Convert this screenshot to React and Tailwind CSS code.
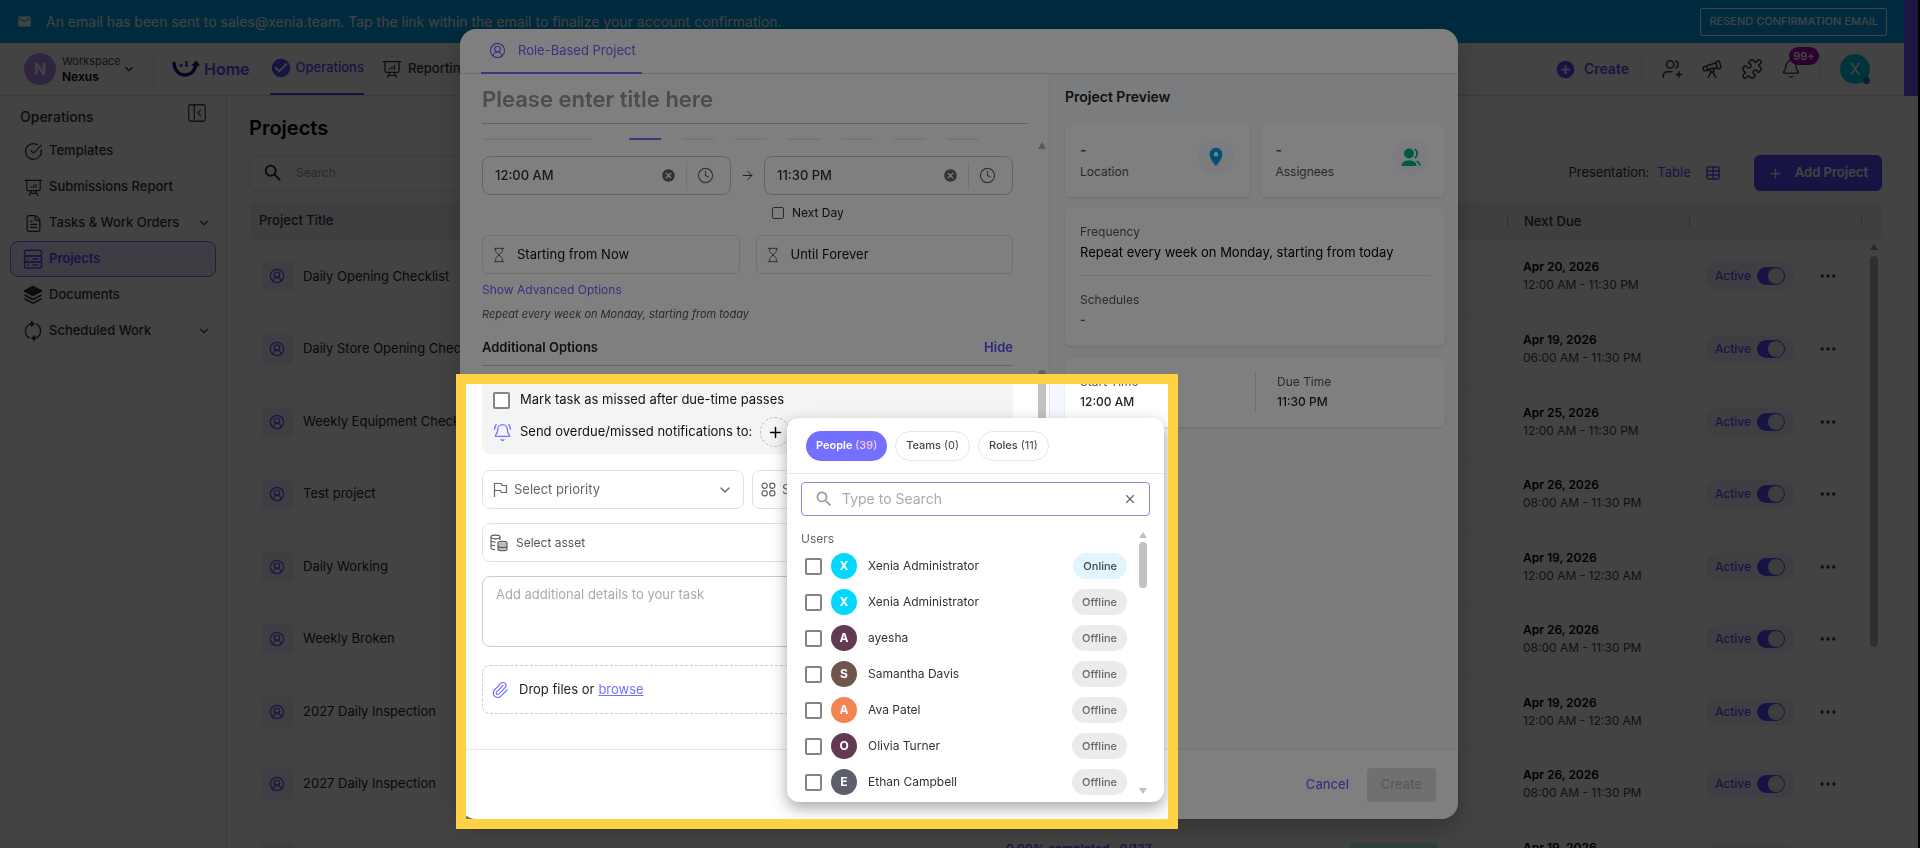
import { useState } from 'react';
import {
    ArrowRight, Bell, BellRing, ChevronDown, CircleCheckBig, CircleUserRound, Clock, Ellipsis, FileText,
    Hourglass, PanelLeftClose, Paperclip, Plus, Puzzle, Table, Telescope, X,
} from 'lucide-react';
import { MdCancel, MdCheckCircle, MdEmail, MdAddCircle, MdLocationOn, MdSearch } from 'react-icons/md';

const PROJECTS = [
    { title: 'Daily Opening Checklist', date: 'Apr 20, 2026', time: '12:00 AM - 11:30 PM' },
    { title: 'Daily Store Opening Checklist', date: 'Apr 19, 2026', time: '06:00 AM - 11:30 PM' },
    { title: 'Weekly Equipment Checklist', date: 'Apr 25, 2026', time: '12:00 AM - 11:30 PM' },
    { title: 'Test project', date: 'Apr 26, 2026', time: '08:00 AM - 11:30 PM' },
    { title: 'Daily Working', date: 'Apr 19, 2026', time: '12:00 AM - 12:30 AM' },
    { title: 'Weekly Broken', date: 'Apr 26, 2026', time: '08:00 AM - 11:30 PM' },
    { title: '2027 Daily Inspection', date: 'Apr 19, 2026', time: '12:00 AM - 12:30 AM' },
    { title: '2027 Daily Inspection', date: 'Apr 26, 2026', time: '08:00 AM - 11:30 PM' },
    { title: '', date: 'Apr 19, 2026', time: '', progress: '0.00% completed · 0/137' },
];

const USERS = [
    { name: 'Xenia Administrator', color: 'bg-[#00d8ff]', online: true },
    { name: 'Xenia Administrator', color: 'bg-[#00d8ff]' },
    { name: 'ayesha', color: 'bg-[#623a51]' },
    { name: 'Samantha Davis', color: 'bg-[#70564a]' },
    { name: 'Ava Patel', color: 'bg-[#f58351]' },
    { name: 'Olivia Turner', color: 'bg-[#623a51]' },
    { name: 'Ethan Campbell', color: 'bg-[#5c5f6b]' },
];

const BoardIcon = ({ size = 20 }) => (
    <svg width={size} height={size} viewBox="0 0 24 24" fill="none" stroke="currentColor" strokeWidth="1.5" strokeLinecap="round">
        <path d="M1.5 3h21M3.5 3v11a2 2 0 0 0 2 2h13a2 2 0 0 0 2-2V3M9 12v-1M12 12V9.500M15 12V8M9.5 16 6.5 22M14.5 16l3 6M8 19.5h8" />
    </svg>
);

const StackIcon = () => (
    <svg width="20" height="20" viewBox="0 0 20 20" fill="none" stroke="currentColor" strokeWidth="1.5" strokeLinecap="round">
        <rect x="1.5" y="1.2" width="17" height="5.9" rx="2" />
        <rect x="1.5" y="7.1" width="17" height="5.9" rx="2" />
        <rect x="1.5" y="13" width="17" height="5.9" rx="2" />
        <path d="M4.5 10h1M4.5 16h1M10 10h5M10 16h5" />
    </svg>
);

const LayersIcon = () => (
    <svg width="20" height="20" viewBox="0 0 20 20" fill="none" stroke="currentColor" strokeWidth="1.6" strokeLinejoin="round">
        <path d="M10 1.500 18.500 6 10 10.500 1.500 6z" fill="currentColor" />
        <path d="M1.500 10 10 14.500 18.500 10M1.500 13.800 10 18.300l8.500-4.500" />
    </svg>
);

const CycleIcon = () => (
    <svg width="20" height="20" viewBox="0 0 20 20" fill="none" stroke="currentColor" strokeWidth="1.4" strokeLinecap="round" strokeLinejoin="round">
        <path d="M13.500 3.200A7.700 7.700 0 0 1 12.500 17.200H11M6.500 16.800A7.700 7.700 0 0 1 7.500 2.800H9" />
        <path d="M8.500.8 11 2.800 8.500 5zM11.500 19.200 9 17.200l2.500-2.200z" fill="currentColor" />
    </svg>
);

const Logo = () => (
    <svg width="28" height="18" viewBox="0 0 28 18" fill="none">
        <path d="M2 3.5C3 11 7.500 15 13 15c5.500 0 10-4 11-11" stroke="#38008c" strokeWidth="3.4" strokeLinecap="round" />
        <path d="M19 5.500 24.500.5 28 6z" fill="#38008c" />
        <path d="M9 4v3M14.500 1v6" stroke="#5a48ff" strokeWidth="3" />
    </svg>
);

const UsersPlusIcon = () => (
    <svg width="22" height="22" viewBox="0 0 24 24" fill="none" stroke="currentColor" strokeWidth="1.6" strokeLinecap="round">
        <circle cx="10" cy="7" r="4" />
        <path d="M16 3.200a4 4 0 0 1 0 7.600M2.500 21v-1.500A4.500 4.500 0 0 1 7 15h5M19.500 15v6M16.500 18h6" />
    </svg>
);

const FlagIcon = () => (
    <svg width="15" height="15" viewBox="0 0 15 15" fill="none" stroke="currentColor" strokeWidth="1.2">
        <path d="M1.500 15V1.500h6.500l1 2h4.500v7H8.500l-1-2h-6" />
    </svg>
);

const CategoryIcon = () => (
    <svg width="15" height="15" viewBox="0 0 15 15" fill="none" stroke="currentColor" strokeWidth="1.2">
        <circle cx="3.700" cy="3.700" r="2.600" />
        <circle cx="11.300" cy="3.700" r="2.600" />
        <circle cx="3.700" cy="11.300" r="2.600" />
        <circle cx="11.300" cy="11.300" r="2.600" />
    </svg>
);

const AssetIcon = () => (
    <svg width="18" height="18" viewBox="0 0 18 18" fill="none" stroke="currentColor" strokeWidth="1.1">
        <ellipse cx="5.500" cy="3" rx="4.500" ry="1.900" />
        <path d="M1 3v11c0 .8 2 1.500 4 1.700M10 3v3M1 6.600c0 .9 2 1.500 4.500 1.500M1 10.300c0 .9 1.500 1.400 4 1.500" />
        <ellipse cx="12.500" cy="8.700" rx="4.500" ry="1.500" fill="#bbb" />
        <path d="M8 8.700v6.500c0 .9 2 1.600 4.500 1.600s4.500-.7 4.500-1.600V8.700M8 12c0 .9 2 1.500 4.500 1.500S17 12.900 17 12" fill="#bbb" />
    </svg>
);

const GroupIcon = () => (
    <svg width="20" height="19" viewBox="0 0 20 19" fill="#00b386">
        <circle cx="8" cy="5.500" r="5" />
        <path d="M.5 18c0-4 3.500-5.500 7.500-5.500s7.500 1.500 7.500 5.500z" />
        <path d="M13.500 1.200c3.500 1 3.500 7.600 0 8.600M15.500 13.200c2 .8 3.200 2.500 3.700 4.300" fill="none" stroke="#00b386" strokeWidth="1.700" />
    </svg>
);

const NavItem = ({ icon, label, active, more }) => (
    <a
        href="#"
        className={
            active
                ? 'flex h-9 items-center rounded-lg border border-[#7b72ff] bg-[#e9e8ff] pr-1 pl-3 text-[13px] font-semibold text-[#5a4fff]'
                : 'flex h-9 items-center rounded-lg border border-transparent pr-1 pl-3 text-[13px] font-medium text-[#333]'
        }
    >
        <span className="flex w-5 justify-center">{icon}</span>
        <span className="ml-1.5 flex-1">{label}</span>
        {more && <ChevronDown size={14} strokeWidth={2} />}
    </a>
);

const Checkbox = ({ id }) => (
    <input id={id} type="checkbox" className="size-[17px] shrink-0 appearance-none rounded-xs border-2 border-[#858585] bg-white checked:bg-[#7370ff]" />
);

const Banner = () => (
    <div className="flex h-[43px] items-center bg-[#00a2ea] pr-[17px] pl-[17px] text-white">
        <MdEmail size={15} />
        <p className="ml-3.5 flex-1 text-sm">
            An email has been sent to sales@xenia.team. Tap the link within the email to finalize your account confirmation.
        </p>
        <button className="h-7 rounded-xs border border-white px-2 text-[11px] font-medium">RESEND CONFIRMATION EMAIL</button>
    </div>
);

const Header = () => (
    <header className="flex h-[53px] items-center border-b border-[#dcdcdc] bg-white px-6">
        <button className="flex h-9 w-[130px] items-center border-r border-[#e4e4e4] text-left">
            <span className="flex size-8 items-center justify-center rounded-full bg-[#b68ff5] text-base font-semibold text-white">N</span>
            <span className="ml-1.5 flex w-[56px] flex-col">
                <span className="text-[11px] leading-4 text-[#444]">Workspace</span>
                <span className="text-xs leading-4 font-semibold text-black">Nexus</span>
            </span>
            <ChevronDown size={14} className="ml-1 text-[#333]" />
        </button>
        <nav className="flex h-full flex-1 items-center">
            <a href="#" className="ml-[18px] flex items-center gap-1 text-base font-semibold text-[#5a4fff]">
                <Logo />
                Home
            </a>
            <a href="#" className="ml-5 flex h-full items-center gap-1 border-b-2 border-[#5a4fff] text-[13px] font-medium text-[#5a4fff]">
                <MdCheckCircle size={22} />
                Operations
            </a>
            <a href="#" className="ml-[18px] flex items-center gap-1.5 text-[13px] font-medium text-[#333]">
                <BoardIcon />
                Reporting
            </a>
        </nav>
        <div className="flex items-center text-[#333]">
            <button className="flex h-7 items-center gap-2 border-r border-[#e4e4e4] pr-3 text-sm font-semibold text-[#5a4fff]">
                <MdAddCircle size={21} />
                Create
            </button>
            <div className="flex items-center gap-[18px] border-r border-[#e4e4e4] py-1 pr-[19px] pl-[19px]">
                <button aria-label="Invite"><UsersPlusIcon /></button>
                <button aria-label="Explore"><Telescope size={22} strokeWidth={1.6} /></button>
                <button aria-label="Integrations"><Puzzle size={22} strokeWidth={1.6} /></button>
                <button aria-label="Notifications" className="relative">
                    <Bell size={20} strokeWidth={1.6} />
                    <span className="absolute -top-3 left-2 flex h-[18px] w-[30px] items-center justify-center rounded-full bg-[#a005b4] text-[11px] font-semibold text-white">
                        99+
                    </span>
                </button>
            </div>
            <span className="relative mr-2.5 ml-[19px] flex size-[30px] items-center justify-center rounded-full bg-[#00c4e0] text-base text-white">
                X
                <span className="absolute right-0 bottom-0 size-[7px] rounded-full bg-[#2f6fe0]" />
            </span>
        </div>
    </header>
);

const Sidebar = () => (
    <aside className="w-[227px] shrink-0 border-r border-[#e2e2e2] px-2.5 pt-1">
        <div className="flex h-[33px] items-center justify-between pr-2 pl-2.5">
            <h2 className="text-sm font-medium text-[#333]">Operations</h2>
            <button aria-label="Collapse sidebar" className="self-start pt-0.5 text-[#444]">
                <PanelLeftClose size={22} strokeWidth={1.4} />
            </button>
        </div>
        <nav className="flex flex-col">
            <NavItem icon={<CircleCheckBig size={19} strokeWidth={1.6} />} label="Templates" />
            <NavItem icon={<BoardIcon size={19} />} label="Submissions Report" />
            <NavItem icon={<FileText size={19} strokeWidth={1.6} />} label="Tasks & Work Orders" more />
            <NavItem icon={<StackIcon />} label="Projects" active />
            <NavItem icon={<LayersIcon />} label="Documents" />
            <NavItem icon={<CycleIcon />} label="Scheduled Work" more />
        </nav>
    </aside>
);

const ProjectTable = () => (
    <div className="relative">
        <table className="w-full table-fixed text-left text-[13px]">
            <colgroup>
                <col />
                <col className="w-[168px]" />
                <col className="w-[177px]" />
                <col className="w-[167px]" />
                <col className="w-[173px]" />
                <col className="w-[182px]" />
                <col className="w-[193px]" />
            </colgroup>
            <thead>
                <tr className="h-[38px] bg-[#eceff8] text-[#333]">
                    <th className="rounded-l-md pl-2.5 font-medium">Project Title</th>
                    <th />
                    <th />
                    <th />
                    <th />
                    <th className="p-0 font-medium">
                        <div className="border-l border-[#bbb] pl-4 leading-3">Next Due</div>
                    </th>
                    <th className="rounded-r-md p-0">
                        <div className="mr-5 h-3 border-x border-[#bbb]" />
                    </th>
                </tr>
            </thead>
            <tbody>
                {PROJECTS.map((project, i) => (
                    <tr key={i} className="h-[72px] border-b border-[#f7f7f7] odd:h-[73px]">
                        <td className="pl-3">
                            <div className="flex items-center gap-2.5 text-[13px] text-[#222]">
                                <span className="flex h-[30px] w-8 items-center justify-center rounded-sm bg-[#efeeff] text-[#5a4fff]">
                                    <CircleUserRound size={16} strokeWidth={1.8} />
                                </span>
                                <span className="truncate">{project.title}</span>
                            </div>
                        </td>
                        <td className="pl-4">
                            <span className="block h-[18px] w-[74px] rounded-full bg-[#5a4fff]" />
                        </td>
                        <td className="pb-4 pl-4 text-xs font-semibold whitespace-nowrap text-[#5a4fff]">{project.progress}</td>
                        <td className="pl-4">
                            <span className="block h-[18px] w-[50px] rounded-full bg-[#5a4fff]" />
                        </td>
                        <td className="pl-4">
                            <span className="block h-7 w-[88px] rounded-sm bg-[#b0f0e8]" />
                        </td>
                        <td className="pl-4 text-xs whitespace-nowrap">
                            <p className="h-[18px] leading-[18px] font-semibold text-black">{project.date}</p>
                            <p className="h-[18px] leading-[18px] text-[#444]">{project.time}</p>
                        </td>
                        <td className="pl-4">
                            <div className="flex items-center gap-[23px]">
                                <label className="flex h-7 w-[90px] items-center justify-center gap-1.5 rounded-full bg-[#f0efff] text-xs font-medium text-[#5a4fff]">
                                    Active
                                    <input
                                        type="checkbox"
                                        defaultChecked
                                        className="relative h-[18px] w-7 appearance-none rounded-full bg-[#5a4fff] before:absolute before:top-px before:right-px before:size-4 before:rounded-full before:bg-[#e8e8e8]"
                                    />
                                </label>
                                <button aria-label="More actions" className="text-[#333]">
                                    <Ellipsis size={20} />
                                </button>
                            </div>
                        </td>
                    </tr>
                ))}
            </tbody>
        </table>
        {/* List scrollbar */}
        <div className="absolute top-[42px] right-1 flex flex-col items-center gap-1.5">
            <span className="border-x-4 border-b-6 border-x-transparent border-b-[#9a9a9a]" />
            <span className="h-[391px] w-2 rounded-full bg-[#b4b4b4]" />
        </div>
    </div>
);

const Projects = () => (
    <main className="min-w-0 flex-1 pt-4 pr-9 pl-[22px]">
        <h1 className="h-[43px] pt-0.5 text-xl font-semibold text-black">Projects</h1>
        <div className="mb-[11px] flex h-9 items-center gap-6">
            <label className="flex h-9 w-80 items-center gap-3 rounded-md border border-[#e6e6e6] px-3">
                <MdSearch size={22} className="text-[#222]" />
                <input placeholder="Search" aria-label="Search projects" className="w-40 text-xs outline-none placeholder:text-[#999]" />
            </label>
            <div className="flex-1" />
            <button className="flex h-[34px] items-center rounded-sm border border-[#f2f2f2] px-2 text-[13px] text-[#333]">
                Presentation: <span className="ml-2 text-[#5a4fff]">Table</span>
                <Table size={16} className="ml-3.5 text-[#5a4fff]" />
            </button>
            <button className="flex h-9 items-center gap-3 rounded-md bg-[#5a4fff] px-3.5 text-[13px] font-semibold text-white">
                <Plus size={15} />
                Add Project
            </button>
        </div>
        <ProjectTable />
    </main>
);

const TimeField = ({ label, value }) => (
    <div className="flex h-[39px] w-[249px] items-center rounded-lg border border-[#c4c4c4] pr-4 pl-3">
        <input aria-label={label} defaultValue={value} className="min-w-0 flex-1 text-[13px] font-medium text-[#333] outline-none" />
        <button aria-label="Clear time"><MdCancel size={15} className="text-[#666]" /></button>
        <span className="mx-2.5 h-7 w-px bg-[#e0e0e0]" />
        <button aria-label="Pick time"><Clock size={17} strokeWidth={1.6} className="text-[#666]" /></button>
    </div>
);

const RangeButton = ({ children }) => (
    <button className="flex h-[39px] flex-1 items-center gap-2.5 rounded-md border border-[#ddd] px-2 text-[13px] text-[#111]">
        <Hourglass size={16} strokeWidth={1.5} className="text-[#666]" />
        {children}
    </button>
);

const ProjectForm = () => (
    <div className="flex min-w-0 flex-1 flex-col pl-[22px]">
        <div className="mr-[22px] h-[50px] shrink-0 border-b border-[#c4c4c4]">
            <input
                aria-label="Project title"
                placeholder="Please enter title here"
                className="h-[49px] w-full text-[22px] font-semibold outline-none placeholder:text-[#999]"
            />
        </div>
        <div className="relative mt-3.5 min-h-0 flex-1 overflow-hidden pr-9">
            <div className="flex h-0.5 items-stretch gap-[21px] px-0.5">
                <span className="mr-4 w-[108px] bg-[#ececec]" />
                <span className="w-8 bg-[#7370ff]" />
                {[...Array(6)].map((_, i) => (
                    <span key={i} className="w-8 bg-[#ececec]" />
                ))}
            </div>
            <div className="mt-4 flex items-center justify-between">
                <TimeField label="Start time" value="12:00 AM" />
                <ArrowRight size={15} strokeWidth={1.6} className="text-[#444]" />
                <TimeField label="Due time" value="11:30 PM" />
            </div>
            <div className="mt-2 ml-[282px] flex h-5 items-center gap-2 pl-2">
                <input id="next-day" type="checkbox" className="size-3 appearance-none rounded-xs border border-[#555]" />
                <label htmlFor="next-day" className="text-xs text-[#222]">Next Day</label>
            </div>
            <div className="mt-3 flex gap-4">
                <RangeButton>Starting from Now</RangeButton>
                <RangeButton>Until Forever</RangeButton>
            </div>
            <button className="mt-2 block text-xs leading-4 text-[#6a66ff]">Show Advanced Options</button>
            <p className="mt-2 text-[11px] leading-4 text-[#555] italic">Repeat every week on Monday, starting from today</p>
            <div className="mt-2 flex h-9 items-center justify-between border-b border-[#c8c8c8]">
                <h3 className="text-[13px] font-semibold text-[#222]">Additional Options</h3>
                <button className="text-[13px] font-semibold text-[#5a4fff]">Hide</button>
            </div>

            <div className="mt-3 rounded-lg bg-[#f4f4f4] px-[11px] py-1.5">
                <div className="flex h-8 items-center gap-2.5">
                    <Checkbox id="mark-missed" />
                    <label htmlFor="mark-missed" className="text-[13px] text-[#111]">
                        Mark task as missed after due-time passes
                    </label>
                </div>
                <div className="flex h-8 items-center gap-2 text-[13px] text-[#111]">
                    <BellRing size={19} strokeWidth={1.6} className="text-[#7370ff]" />
                    Send overdue/missed notifications to:
                    <button aria-label="Add recipients" className="flex size-[30px] items-center justify-center rounded-full border border-dashed border-[#bbb] text-black">
                        <Plus size={17} />
                    </button>
                </div>
            </div>

            <div className="mt-4 flex gap-2">
                <div className="flex h-[39px] w-[262px] items-center gap-1.5 rounded-lg border border-[#e2e2e2] px-2.5 text-[#666]">
                    <FlagIcon />
                    <select aria-label="Priority" className="flex-1 appearance-none text-[13px] outline-none">
                        <option>Select priority</option>
                    </select>
                    <ChevronDown size={16} />
                </div>
                <div className="flex h-[39px] flex-1 items-center gap-1.5 rounded-lg border border-[#e2e2e2] px-2 text-[#666]">
                    <CategoryIcon />
                    <select aria-label="Category" className="flex-1 appearance-none text-[13px] outline-none">
                        <option>Select category</option>
                    </select>
                </div>
            </div>
            <button className="mt-3.5 flex h-[39px] w-full items-center gap-2 rounded-lg border border-[#e2e2e2] px-[7px] text-xs text-[#555]">
                <AssetIcon />
                Select asset
            </button>
            <textarea
                aria-label="Details"
                placeholder="Add additional details to your task"
                className="mt-3.5 block h-[71px] w-full resize-none rounded-lg border border-[#ccc] px-[13px] py-2 text-[13px] outline-none placeholder:text-[#aaa]"
            />
            <div className="mt-[18px] flex h-[49px] items-center rounded-lg border border-dashed border-[#ccc] px-2 text-[13px] text-[#222]">
                <Paperclip size={18} strokeWidth={1.6} className="mr-2.5 text-[#7370ff]" />
                Drop files or <a href="#" className="ml-1 text-[#7370ff] underline">browse</a>
            </div>

            {/* Scrollbar */}
            <div className="absolute top-1 right-[3px] flex flex-col items-center">
                <span className="border-x-4 border-b-7 border-x-transparent border-b-[#b4b4b4]" />
                <span className="mt-[221px] h-[280px] w-2 rounded-full bg-[#c1c1c1]" />
            </div>
        </div>
    </div>
);

const StatCard = ({ label, icon }) => (
    <div className="flex h-[73px] flex-1 items-start justify-between rounded-md bg-white pt-[15px] pr-4 pl-[15px] shadow-sm">
        <div className="text-[#555]">
            <p className="text-sm leading-[22px] font-semibold">-</p>
            <p className="text-xs leading-[22px]">{label}</p>
        </div>
        <span className="flex size-9 items-center justify-center rounded-full bg-[#f5f9fe]">{icon}</span>
    </div>
);

const ProjectPreview = () => (
    <section className="w-[409px] border-l border-[#e4e6ee] bg-[#f5f8fc] pr-[13px] pl-[15px]">
        <h2 className="h-[50px] pt-[13px] text-sm font-semibold text-[#222]">Project Preview</h2>
        <div className="flex gap-[11px]">
            <StatCard label="Location" icon={<MdLocationOn size={22} className="text-[#00a3ea]" />} />
            <StatCard label="Assignees" icon={<GroupIcon />} />
        </div>
        <div className="mt-[11px] h-[138px] rounded-md bg-white px-[15px] pt-3.5 text-xs shadow-sm">
            <p className="leading-5 text-[#555]">Frequency</p>
            <p className="border-b border-[#e2e2e2] pb-3 text-[13px] leading-[21px] text-black">
                Repeat every week on Monday, starting from today
            </p>
            <p className="mt-3.5 leading-5 text-[#555]">Schedules</p>
            <p className="leading-5 font-semibold text-[#555]">-</p>
        </div>
        <div className="mt-[11px] flex h-[70px] items-center rounded-md bg-white px-[15px] text-xs shadow-sm">
            <div className="w-[175px]">
                <p className="leading-5 text-[#555]">Start Time</p>
                <p className="text-xs leading-5 font-medium text-[#222]">12:00 AM</p>
            </div>
            <div className="flex-1 border-l border-[#ddd] pl-[21px]">
                <p className="leading-5 text-[#555]">Due Time</p>
                <p className="text-xs leading-5 font-medium text-[#222]">11:30 PM</p>
            </div>
        </div>
    </section>
);

const PeoplePicker = () => {
    const [tab, setTab] = useState('People');
    const tabs = [['People', 39], ['Teams', 0], ['Roles', 11]];

    return (
        <div className="absolute top-[389px] left-[327px] flex h-[384px] w-[377px] flex-col rounded-xl bg-white shadow-[0_6px_16px_rgba(0,0,0,0.35)]">
            <div className="flex h-14 items-center gap-2 border-b border-[#e8e8e8] px-[19px]">
                {tabs.map(([name, count]) => (
                    <button
                        key={name}
                        onClick={() => setTab(name)}
                        className={
                            tab === name
                                ? 'h-[30px] rounded-full bg-[#7370ff] px-2.5 text-[11px] font-semibold text-white'
                                : 'h-[30px] rounded-full border border-[#e6e6e6] px-2.5 text-[11px] font-medium text-[#444]'
                        }
                    >
                        {name} <span className={tab === name ? 'font-medium text-[#ffc9e4]' : 'font-normal'}>({count})</span>
                    </button>
                ))}
            </div>
            <label className="mx-3.5 mt-2 flex h-[34px] items-center rounded-sm border border-[#8f88e8] px-3">
                <MdSearch size={20} className="text-[#999]" />
                <input placeholder="Type to Search" aria-label="Search people" className="ml-2 min-w-0 flex-1 text-sm outline-none placeholder:text-[#aaa]" />
                <button aria-label="Clear search"><X size={14} className="text-[#666]" /></button>
            </label>
            <p className="mt-3.5 pl-3.5 text-xs leading-[18px] text-[#666]">Users</p>
            <div className="flex min-h-0 flex-1 pl-[18px]">
                <ul className="flex-1">
                    {USERS.map((user, i) => (
                        <li key={i} className="flex h-9 items-center">
                            <Checkbox id={`user-${i}`} />
                            <span className={`${user.color} ml-[9px] flex size-[26px] items-center justify-center rounded-full text-xs font-bold text-white`}>
                                {user.name[0].toUpperCase()}
                            </span>
                            <label htmlFor={`user-${i}`} className="ml-[11px] flex-1 text-xs text-[#333]">{user.name}</label>
                            <span
                                className={
                                    user.online
                                        ? 'flex h-[26px] items-center rounded-full bg-[#e0f5fe] px-2.5 text-[11px] font-medium text-[#444]'
                                        : 'flex h-[26px] items-center rounded-full bg-[#ebebeb] px-2.5 text-[11px] font-medium text-[#666]'
                                }
                            >
                                {user.online ? 'Online' : 'Offline'}
                            </span>
                        </li>
                    ))}
                </ul>
                <div className="-mt-4 mr-[17px] ml-3 flex flex-col items-center pb-2">
                    <span className="border-x-4 border-b-6 border-x-transparent border-b-[#c1c1c1]" />
                    <span className="mt-1 h-[46px] w-2 rounded-full bg-[#c1c1c1]" />
                    <span className="mt-auto border-x-4 border-t-6 border-x-transparent border-t-[#c1c1c1]" />
                </div>
            </div>
        </div>
    );
};

const ProjectDialog = () => (
    <div className="fixed inset-y-0 right-0.5 left-0 flex justify-center overflow-hidden bg-black/47 py-[29px]">
        <div role="dialog" className="relative w-[998px]">
            <div className="flex h-full flex-col overflow-hidden rounded-2xl bg-white shadow-[0_10px_30px_rgba(0,0,0,0.25)]">
                <div className="flex h-[45px] shrink-0 border-b border-[#d8d8d8] px-[21px]">
                    <button className="-mb-px flex items-center gap-3 border-b-2 border-[#7370ff] pr-1.5 pl-2 text-[13px] text-[#6a66ff]">
                        <CircleUserRound size={17} strokeWidth={1.6} />
                        Role-Based Project
                    </button>
                </div>
                <div className="flex min-h-0 flex-1">
                    <ProjectForm />
                    <ProjectPreview />
                </div>
                <div className="flex h-[70px] shrink-0 items-center justify-end gap-[18px] border-t border-[#e8e8e8] pr-[22px]">
                    <button className="text-[13px] font-medium text-[#6a66ff]">Cancel</button>
                    <button disabled className="h-[34px] w-[69px] rounded-sm bg-[#e0e0e0] text-[13px] font-medium text-[#b0b0b0]">Create</button>
                </div>
            </div>
            <PeoplePicker />
            {/* Spotlight */}
            <div className="pointer-events-none absolute top-[345px] -left-1 h-[455px] w-[722px] border-10 border-[#ffd144] shadow-[0_0_0_2000px_rgba(0,0,0,0.5)]" />
        </div>
    </div>
);

export default function App() {
    return (
        <div className="h-screen overflow-hidden bg-black pr-0.5 font-['Inter',sans-serif]">
            <div className="flex h-full flex-col bg-white">
                <div className="border-r-14 border-[#6a5cff]">
                    <Banner />
                    <Header />
                </div>
                <div className="flex min-h-0 flex-1">
                    <Sidebar />
                    <Projects />
                </div>
            </div>
            <ProjectDialog />
        </div>
    );
}
